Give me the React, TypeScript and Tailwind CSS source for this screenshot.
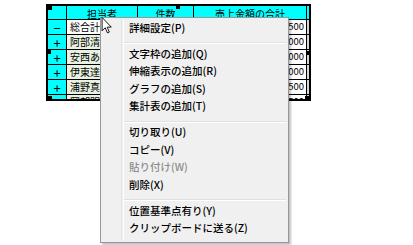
import React from "react";

const rows = [
  { sign: "−", name: "総合計", count: "215", total: "21,862,500", first: true },
  { sign: "+", name: "阿部清二", count: "31", total: "3,251,000" },
  { sign: "+", name: "安西あゆみ", count: "28", total: "2,904,000" },
  { sign: "+", name: "伊東達也", count: "35", total: "3,712,000" },
  { sign: "+", name: "浦野真一", count: "26", total: "2,687,500" },
  { sign: "+", name: "岡部明子", count: "30", total: "3,110,500" },
];

type MenuEntry = { label: string; disabled?: boolean } | "sep";

const menu: MenuEntry[] = [
  { label: "詳細設定(P)" },
  "sep",
  { label: "文字枠の追加(Q)" },
  { label: "伸縮表示の追加(R)" },
  { label: "グラフの追加(S)" },
  { label: "集計表の追加(T)" },
  "sep",
  { label: "切り取り(U)" },
  { label: "コピー(V)" },
  { label: "貼り付け(W)", disabled: true },
  { label: "削除(X)" },
  "sep",
  { label: "位置基準点有り(Y)" },
  { label: "クリップボードに送る(Z)" },
];

function Handle({ className }: { className: string }) {
  return <div className={`absolute bg-black ${className}`} />;
}

function PivotTable() {
  return (
    <div className="relative ml-[46px] mt-[4px] h-[97px] w-[265px] overflow-hidden border-2 border-black">
      <div className="grid grid-cols-[18px_70px_55px_112px_2px] grid-rows-[13px_14px_14px_14px_14px_14px_14px] gap-px bg-black text-[10px] leading-none text-black">
        <div className="bg-[#00ffff]" />
        <div className="flex items-end justify-center bg-[#00ffff]">担当者</div>
        <div className="flex items-end justify-center bg-[#00ffff]">件数</div>
        <div className="flex items-end justify-center bg-[#00ffff]">売上金額の合計</div>
        <div className="bg-[#00ffff]" />
        {rows.map((r) => (
          <React.Fragment key={r.name}>
            <div className="flex items-center justify-center bg-[#00ffff] text-[13px]">{r.sign}</div>
            <div
              className={`flex items-center overflow-hidden whitespace-nowrap pl-[3px] ${r.first ? "bg-white" : "bg-[#e9f2e2]"}`}
            >
              {r.name}
            </div>
            <div className="flex items-center justify-end bg-white pr-[3px]">{r.count}</div>
            <div className="flex items-center justify-end bg-white pr-[2px] text-[9.5px]">{r.total}</div>
            <div className="bg-[#d8d8d8]" />
          </React.Fragment>
        ))}
      </div>
      <Handle className="left-0 top-0 h-[4px] w-[4px]" />
      <Handle className="left-[128px] top-0 h-[3px] w-[4px]" />
      <Handle className="left-0 top-[44px] h-[4px] w-[3px]" />
      <Handle className="right-0 top-[45px] h-[4px] w-[3px]" />
      <Handle className="bottom-0 left-0 h-[3px] w-[4px]" />
      <Handle className="bottom-0 right-0 h-[3px] w-[4px]" />
    </div>
  );
}

function ContextMenu() {
  return (
    <div className="absolute left-[100px] top-[17px] h-[226px] w-[189px] border border-[#979797] bg-[#f0f0f0] pt-[1px] shadow-[2px_2px_2px_rgba(0,0,0,0.25)]">
      <div className="absolute bottom-[2px] left-[20px] top-[2px] w-[2px] border-l border-[#e2e3e3] shadow-[1px_0_0_#ffffff]" />
      {menu.map((m, i) =>
        m === "sep" ? (
          <div key={i} className="flex h-[8.5px] items-end pb-[1px] pl-[23px] pr-[2px]">
            <div className="h-[2px] w-full border-t border-[#e0e0e0] bg-white" />
          </div>
        ) : (
          <div
            key={i}
            className={`flex h-[17.5px] items-center whitespace-nowrap pl-[28px] text-[10.5px] font-medium ${m.disabled ? "text-[#8d8d8d]" : "text-black"}`}
          >
            {m.label}
          </div>
        )
      )}
    </div>
  );
}

function Cursor() {
  return (
    <svg className="absolute left-[101px] top-[17px]" width="12" height="17" viewBox="0 0 12 19">
      <path
        d="M0.5 0.5 L0.5 15.5 L4 12 L6.5 17.8 L8.6 16.9 L6.2 11.3 L10.8 11.3 Z"
        fill="#ffffff"
        stroke="#000000"
        strokeWidth="1"
        strokeLinejoin="miter"
      />
    </svg>
  );
}

export default function App() {
  return (
    <div
      className="relative h-[245px] w-[413px] overflow-hidden bg-white"
      style={{ fontFamily: '"Noto Sans CJK JP", "Noto Sans", sans-serif' }}
    >
      <PivotTable />
      <ContextMenu />
      <Cursor />
    </div>
  );
}
